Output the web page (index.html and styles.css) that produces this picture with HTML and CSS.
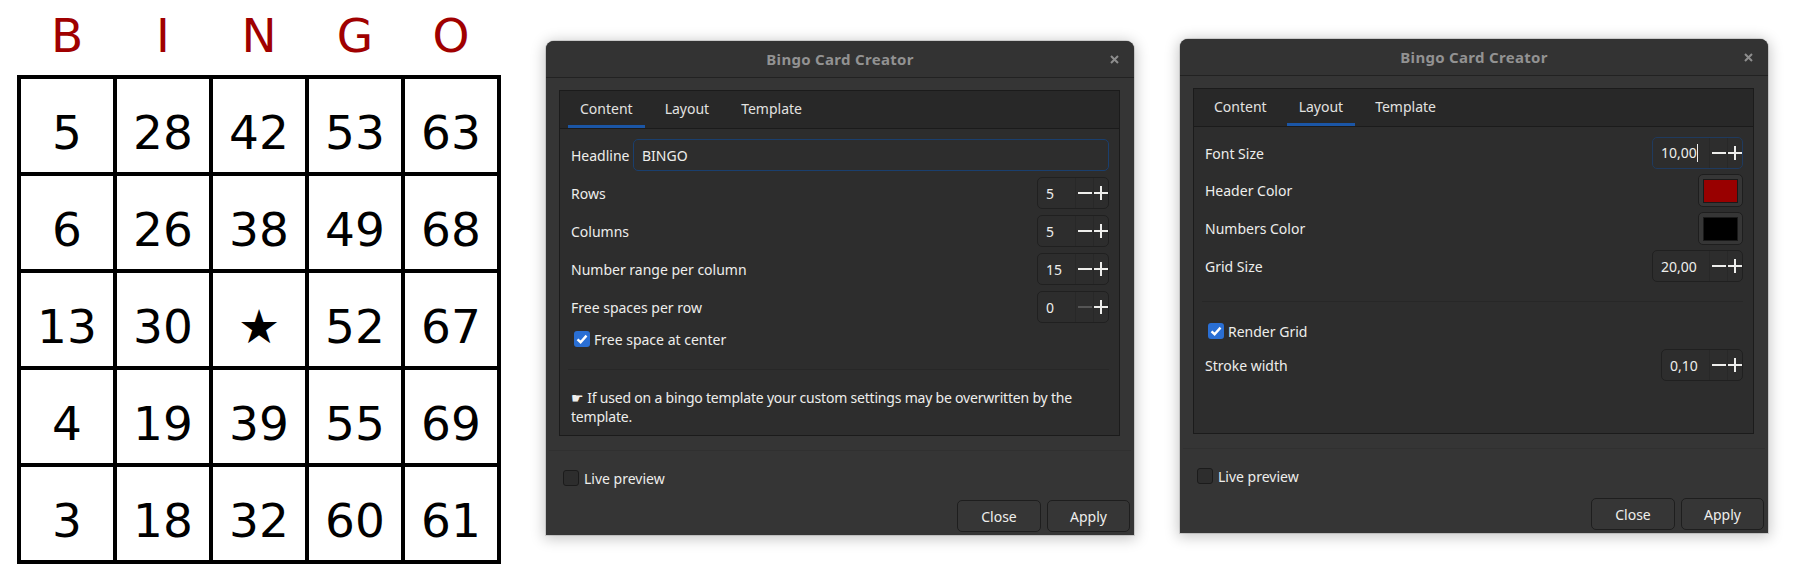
FILE: index.html
```html
<!DOCTYPE html>
<html>
<head>
<meta charset="utf-8">
<link rel="stylesheet" href="styles.css">
</head>
<body>
<div class="stage">
  <div class="card">
    <div class="card-head"><span>B</span><span>I</span><span>N</span><span>G</span><span>O</span></div>
    <div class="grid">
      <div class="cell">5</div><div class="cell">28</div><div class="cell">42</div><div class="cell">53</div><div class="cell">63</div>
      <div class="cell">6</div><div class="cell">26</div><div class="cell">38</div><div class="cell">49</div><div class="cell">68</div>
      <div class="cell">13</div><div class="cell">30</div><div class="cell star">★</div><div class="cell">52</div><div class="cell">67</div>
      <div class="cell">4</div><div class="cell">19</div><div class="cell">39</div><div class="cell">55</div><div class="cell">69</div>
      <div class="cell">3</div><div class="cell">18</div><div class="cell">32</div><div class="cell">60</div><div class="cell">61</div>
    </div>
  </div>

  <section class="dialog d1">
    <header class="titlebar">Bingo Card Creator
      <svg class="close-x" width="9" height="9" viewBox="0 0 9 9"><path d="M1 1L8 8M8 1L1 8" stroke="#8e8e8e" stroke-width="2"/></svg>
    </header>
    <div class="body">
      <div class="notebook">
        <nav class="tabs">
          <div class="tab active">Content</div>
          <div class="tab">Layout</div>
          <div class="tab">Template</div>
        </nav>
        <div class="page">
          <div class="row"><span>Headline</span><div class="entry focus">BINGO</div></div>
          <div class="row"><span>Rows</span>
            <div class="spin w72"><div class="val">5</div>
              <div class="sbtn minus"><svg width="14" height="14" viewBox="0 0 14 14"><path d="M0 7H14" stroke="#eeeeec" stroke-width="2"/></svg></div>
              <div class="sbtn plus"><svg width="14" height="14" viewBox="0 0 14 14"><path d="M0 7H14M7 0V14" stroke="#eeeeec" stroke-width="2"/></svg></div>
            </div>
          </div>
          <div class="row"><span>Columns</span>
            <div class="spin w72"><div class="val">5</div>
              <div class="sbtn minus"><svg width="14" height="14" viewBox="0 0 14 14"><path d="M0 7H14" stroke="#eeeeec" stroke-width="2"/></svg></div>
              <div class="sbtn plus"><svg width="14" height="14" viewBox="0 0 14 14"><path d="M0 7H14M7 0V14" stroke="#eeeeec" stroke-width="2"/></svg></div>
            </div>
          </div>
          <div class="row"><span>Number range per column</span>
            <div class="spin w72"><div class="val">15</div>
              <div class="sbtn minus"><svg width="14" height="14" viewBox="0 0 14 14"><path d="M0 7H14" stroke="#eeeeec" stroke-width="2"/></svg></div>
              <div class="sbtn plus"><svg width="14" height="14" viewBox="0 0 14 14"><path d="M0 7H14M7 0V14" stroke="#eeeeec" stroke-width="2"/></svg></div>
            </div>
          </div>
          <div class="row"><span>Free spaces per row</span>
            <div class="spin w72"><div class="val">0</div>
              <div class="sbtn minus"><svg width="14" height="14" viewBox="0 0 14 14"><path d="M0 7H14" stroke="#555555" stroke-width="2"/></svg></div>
              <div class="sbtn plus"><svg width="14" height="14" viewBox="0 0 14 14"><path d="M0 7H14M7 0V14" stroke="#eeeeec" stroke-width="2"/></svg></div>
            </div>
          </div>
          <div class="check-row">
            <span class="cb on"><svg width="16" height="16" viewBox="0 0 16 16"><path d="M3.5 8.3L6.6 11.2L12.5 4.6" fill="none" stroke="#fff" stroke-width="2.4"/></svg></span>
            <span>Free space at center</span>
          </div>
          <div class="sep sep-a"></div>
          <p class="hint">☛ If used on a bingo template your custom settings may be overwritten by the<br>template.</p>
        </div>
      </div>
    </div>
    <div class="action-sep"></div>
    <div class="live"><span class="cb off"></span><span>Live preview</span></div>
    <div class="buttons"><div class="btn close">Close</div><div class="btn apply">Apply</div></div>
  </section>

  <section class="dialog d2">
    <header class="titlebar">Bingo Card Creator
      <svg class="close-x" width="9" height="9" viewBox="0 0 9 9"><path d="M1 1L8 8M8 1L1 8" stroke="#8e8e8e" stroke-width="2"/></svg>
    </header>
    <div class="body">
      <div class="notebook">
        <nav class="tabs">
          <div class="tab">Content</div>
          <div class="tab active">Layout</div>
          <div class="tab">Template</div>
        </nav>
        <div class="page tight">
          <div class="row"><span>Font Size</span>
            <div class="spin w91 focus"><div class="val"><span class="caret">10,00</span></div>
              <div class="sbtn minus"><svg width="14" height="14" viewBox="0 0 14 14"><path d="M0 7H14" stroke="#eeeeec" stroke-width="2"/></svg></div>
              <div class="sbtn plus"><svg width="14" height="14" viewBox="0 0 14 14"><path d="M0 7H14M7 0V14" stroke="#eeeeec" stroke-width="2"/></svg></div>
            </div>
          </div>
          <div class="row tall"><span>Header Color</span>
            <div class="color-btn"><span class="swatch red"></span></div>
          </div>
          <div class="row tall"><span>Numbers Color</span>
            <div class="color-btn"><span class="swatch black"></span></div>
          </div>
          <div class="row"><span>Grid Size</span>
            <div class="spin w91"><div class="val">20,00</div>
              <div class="sbtn minus"><svg width="14" height="14" viewBox="0 0 14 14"><path d="M0 7H14" stroke="#eeeeec" stroke-width="2"/></svg></div>
              <div class="sbtn plus"><svg width="14" height="14" viewBox="0 0 14 14"><path d="M0 7H14M7 0V14" stroke="#eeeeec" stroke-width="2"/></svg></div>
            </div>
          </div>
          <div class="sep sep-b"></div>
          <div class="check-row cr-b">
            <span class="cb on"><svg width="16" height="16" viewBox="0 0 16 16"><path d="M3.5 8.3L6.6 11.2L12.5 4.6" fill="none" stroke="#fff" stroke-width="2.4"/></svg></span>
            <span>Render Grid</span>
          </div>
          <div class="row stroke-row"><span>Stroke width</span>
            <div class="spin w82"><div class="val">0,10</div>
              <div class="sbtn minus"><svg width="14" height="14" viewBox="0 0 14 14"><path d="M0 7H14" stroke="#eeeeec" stroke-width="2"/></svg></div>
              <div class="sbtn plus"><svg width="14" height="14" viewBox="0 0 14 14"><path d="M0 7H14M7 0V14" stroke="#eeeeec" stroke-width="2"/></svg></div>
            </div>
          </div>
        </div>
      </div>
    </div>
    <div class="action-sep"></div>
    <div class="live"><span class="cb off"></span><span>Live preview</span></div>
    <div class="buttons"><div class="btn close">Close</div><div class="btn apply">Apply</div></div>
  </section>
</div>
</body>
</html>
```

FILE: styles.css
```css
html, body {
  margin: 0;
  background: #ffffff;
}
.stage {
  display: flex;
  align-items: flex-start;
  width: 1798px;
  height: 578px;
  overflow: hidden;
}

/* Bingo card */
.card {
  margin-left: 17px;
  width: 484px;
  font-family: "DejaVu Sans", sans-serif;
}
.card-head {
  display: grid;
  grid-template-columns: repeat(5, 92px);
  column-gap: 4px;
  padding: 8px 4px 0;
  height: 75px;
  box-sizing: border-box;
  color: #a00000;
  font-size: 47px;
  line-height: normal;
  text-align: center;
}
.grid {
  display: grid;
  grid-template-columns: repeat(5, 92px);
  grid-template-rows: repeat(5, 93px);
  gap: 4px;
  padding: 4px;
  background: #000;
}
.cell {
  background: #fff;
  display: flex;
  align-items: center;
  justify-content: center;
  font-size: 47px;
  padding-top: 13px;
  box-sizing: border-box;
  color: #000;
}

/* Dialogs */
.dialog {
  width: 588px;
  box-sizing: border-box;
  background: #353535;
  border-radius: 8px 8px 0 0;
  box-shadow: 0 2px 14px 2px rgba(0, 0, 0, 0.22), 0 0 0 1px rgba(0, 0, 0, 0.12);
  color: #eeeeec;
  font-family: "Noto Sans", sans-serif;
  font-size: 14px;
  display: flex;
  flex-direction: column;
}
.d1 {
  margin-left: 45px;
  margin-top: 41px;
}
.d2 {
  margin-left: 46px;
  margin-top: 39px;
}
.titlebar {
  position: relative;
  height: 36px;
  border-bottom: 1px solid #222222;
  border-radius: 8px 8px 0 0;
  background: #333333;
  display: flex;
  align-items: center;
  justify-content: center;
  font-weight: bold;
  font-size: 15px;
  letter-spacing: 0.3px;
  color: #929292;
}
.close-x {
  position: absolute;
  right: 15px;
  top: 14px;
}
.body {
  padding: 12px 14px 14px 13px;
}
.notebook {
  height: 346px;
  box-sizing: border-box;
  border: 1px solid #1b1b1b;
  background: #2d2d2d;
  display: flex;
  flex-direction: column;
}
.tabs {
  display: flex;
  gap: 8px;
  height: 37px;
  padding-left: 8px;
  background: #282828;
  border-bottom: 1px solid #1b1b1b;
}
.tab {
  padding: 0 12px;
  display: flex;
  align-items: center;
  border-bottom: 3px solid transparent;
  color: #e2e2e0;
}
.tab.active {
  border-bottom-color: #1b56a6;
}
.page {
  padding: 10px 10px 0 11px;
  display: flex;
  flex-direction: column;
  gap: 6px;
}
.page.tight {
  gap: 5px;
}
.row {
  display: flex;
  align-items: center;
  justify-content: space-between;
  height: 32px;
}
.row.tall {
  height: 33px;
}
.entry {
  width: 476px;
  height: 32px;
  box-sizing: border-box;
  border: 1px solid #1a3f6e;
  border-radius: 5px;
  padding-left: 8px;
  display: flex;
  align-items: center;
  background: #2d2d2d;
}
.spin {
  display: flex;
  height: 32px;
  box-sizing: border-box;
  border: 1px solid #202020;
  border-radius: 5px;
  background: #2d2d2d;
}
.spin.focus {
  border-color: #1f3a5e;
}
.spin.w72 { width: 72px; }
.spin.w91 { width: 91px; }
.spin.w82 { width: 82px; }
.val {
  flex: 1;
  padding-left: 8px;
  display: flex;
  align-items: center;
}
.caret {
  border-right: 1px solid #eeeeec;
  line-height: 18px;
}
.sbtn {
  display: flex;
  align-items: center;
  justify-content: center;
  box-sizing: border-box;
  border-left: 1px solid #282828;
}
.sbtn.minus {
  width: 18px;
}
.sbtn.plus {
  width: 15px;
}
.color-btn {
  width: 45px;
  height: 33px;
  box-sizing: border-box;
  border: 1px solid #1e1e1e;
  border-radius: 5px;
  background: #363636;
  display: flex;
  align-items: center;
  justify-content: center;
}
.swatch {
  width: 35px;
  height: 24px;
  box-sizing: border-box;
  border: 1px solid #1a1a1a;
}
.swatch.red { background: #990000; }
.swatch.black { background: #000000; }
.check-row {
  display: flex;
  align-items: center;
  gap: 4px;
  height: 20px;
  padding-left: 3px;
}
.cr-b {
  margin-top: 14px;
}
.stroke-row {
  margin-top: 3px;
}
.cb {
  width: 16px;
  height: 16px;
  box-sizing: border-box;
  border-radius: 3px;
  display: block;
}
.cb svg { display: block; }
.cb.on {
  background: #2a6fd4;
}
.cb.off {
  border: 1px solid #1b1b1b;
  background: #2d2d2d;
}
.sep {
  height: 1px;
  background: #272727;
  margin-left: -3px;
}
.sep-a { margin-top: 14px; }
.sep-b { margin-top: 14px; }
.hint {
  margin: 12px 0 0;
  line-height: 19px;
  letter-spacing: -0.2px;
}
.action-sep {
  height: 1px;
  background: #303030;
  margin: 0 3px;
}
.live {
  display: flex;
  align-items: center;
  gap: 5px;
  height: 16px;
  margin-top: 19px;
  padding-left: 17px;
}
.buttons {
  display: flex;
  justify-content: flex-end;
  gap: 6px;
  margin-top: 14px;
  padding: 0 4px 3px 0;
}
.btn {
  height: 32px;
  box-sizing: border-box;
  border: 1px solid #1e1e1e;
  border-radius: 5px;
  background: #363636;
  display: flex;
  align-items: center;
  justify-content: center;
}
.btn.close { width: 84px; }
.btn.apply { width: 83px; }
```
